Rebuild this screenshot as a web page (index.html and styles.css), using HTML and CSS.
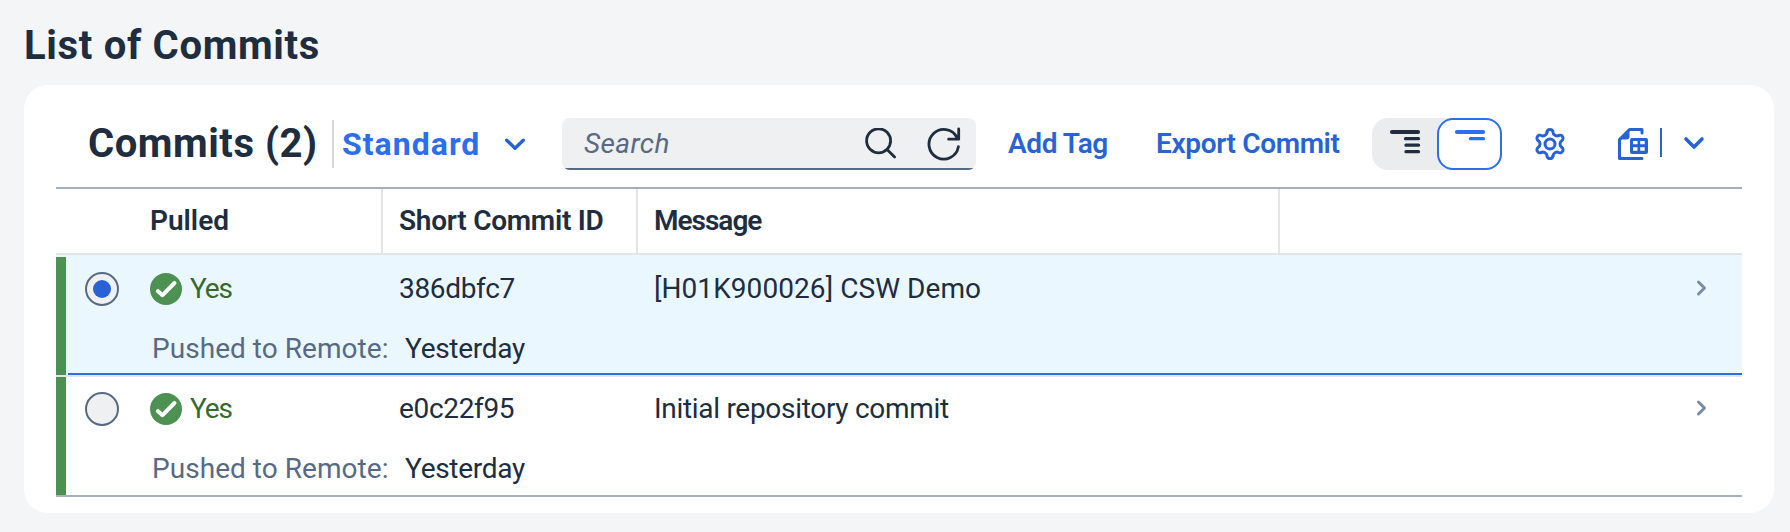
FILE: index.html
```html
<!DOCTYPE html>
<html lang="en">
<head>
<meta charset="utf-8">
<title>List of Commits</title>
<link rel="stylesheet" href="styles.css">
</head>
<body>
<h1 class="page-title">List of Commits</h1>
<section class="card">
  <div class="toolbar">
    <h2 class="table-title">Commits (2)</h2>
    <div class="variant">
      <span class="variant-name">Standard</span>
      <svg class="variant-arrow" width="24" height="24" viewBox="0 0 24 24"><path d="M3.700 8.200 12 16.200l8.300-8" /></svg>
    </div>
    <div class="search">
      <span class="search-hint">Search</span>
      <svg class="search-icon" width="32" height="32" viewBox="0 0 32 32"><circle cx="13.600" cy="12.800" r="12" /><path d="m22.300 21.800 7.300 7.300" /></svg>
      <svg class="refresh-icon" width="34" height="34" viewBox="0 0 34 34"><path d="M31.400 19.600A14.800 14.800 0 1 1 30 10.600M31.700 2v10.200H21.600" /></svg>
    </div>
    <button class="link-button add-tag">Add Tag</button>
    <button class="link-button export-commit">Export Commit</button>
    <div class="segmented">
      <button class="segment"><svg width="32" height="26" viewBox="0 0 32 26"><path class="thick" d="M3 3h26" /><path d="M16.500 9.700h13M17 16.200h12.500M17 22.700h12.500" /></svg></button>
      <button class="segment selected"><svg width="32" height="26" viewBox="0 0 32 26"><path class="thick" d="M3 3h26" /><path d="M16.500 9.700h13" /></svg></button>
    </div>
    <svg class="gear" width="32" height="34" viewBox="-16 -17 32 34">
      <path id="tooth" d="M-3-11.800A3 2.800 0 0 1 3-11.800C3-9.200 6.470-7.200 8.720-8.500" />
      <use href="#tooth" transform="rotate(60)" /><use href="#tooth" transform="rotate(120)" /><use href="#tooth" transform="rotate(180)" /><use href="#tooth" transform="rotate(240)" /><use href="#tooth" transform="rotate(300)" />
      <circle r="5" />
    </svg>
    <div class="export-split">
      <svg class="sheet" width="32" height="32" viewBox="0 0 32 32"><path class="line" d="M24 5V1.500H11.500L1.500 11.500v19H24" /><path class="fill" d="M11.500 1.500v7a3 3 0 0 1-3 3h-7z" /><path class="fill" fill-rule="evenodd" d="M14 10h14a2 2 0 0 1 2 2v12a2 2 0 0 1-2 2H14a2 2 0 0 1-2-2V12a2 2 0 0 1 2-2zm1 3v3.300h4.500V13zm7.200 0v3.300h4.500V13zm-7.200 6.300v3.400h4.500v-3.400zm7.200 0v3.400h4.500v-3.400z" /></svg>
      <span class="split-line"></span>
      <svg class="export-arrow" width="24" height="24" viewBox="0 0 24 24"><path d="m4 7 8 8 8-8" /></svg>
    </div>
  </div>

  <div class="table">
    <div class="head">
      <div class="th pulled">Pulled</div>
      <div class="th commit">Short Commit ID</div>
      <div class="th message">Message</div>
      <div class="th"></div>
    </div>

    <div class="row active">
      <div class="highlight"></div>
      <div class="row-body">
        <div class="cells">
          <span class="radio"><span class="dot"></span></span>
          <span class="status"><svg width="32" height="32" viewBox="0 0 32 32"><circle cx="16" cy="16" r="16" /><path d="m7.800 18 4.700 4.200L24.500 10" /></svg><span class="yes">Yes</span></span>
          <span class="hash">386dbfc7</span>
          <span class="text demo">[H01K900026] CSW Demo</span>
          <svg class="nav" width="16" height="20" viewBox="0 0 16 20"><path d="m3.500 4 6 6-6 6" /></svg>
        </div>
        <div class="details"><span class="label">Pushed to Remote:</span><span class="value">Yesterday</span></div>
      </div>
    </div>

    <div class="row last">
      <div class="highlight"></div>
      <div class="row-body">
        <div class="cells">
          <span class="radio"></span>
          <span class="status"><svg width="32" height="32" viewBox="0 0 32 32"><circle cx="16" cy="16" r="16" /><path d="m7.800 18 4.700 4.200L24.500 10" /></svg><span class="yes">Yes</span></span>
          <span class="hash">e0c22f95</span>
          <span class="text">Initial repository commit</span>
          <svg class="nav" width="16" height="20" viewBox="0 0 16 20"><path d="m3.500 4 6 6-6 6" /></svg>
        </div>
        <div class="details"><span class="label">Pushed to Remote:</span><span class="value">Yesterday</span></div>
      </div>
    </div>
  </div>
</section>
</body>
</html>
```

FILE: styles.css
```css
* { box-sizing: border-box; }

body {
  margin: 0;
  height: 532px;
  overflow: hidden;
  background: #f4f5f7;
  color: #202d3e;
  font: 400 28px/40px Roboto, "Noto Sans", sans-serif;
  white-space: nowrap;
}

svg { display: block; flex: none; fill: none; stroke: currentColor; stroke-linecap: round; stroke-linejoin: round; }

button { margin: 0; padding: 0; border: 0; background: none; font: inherit; color: inherit; }

.page-title {
  margin: 0;
  height: 85px;
  padding: 21px 0 0 24px;
  font-size: 40px;
  line-height: 50px;
  letter-spacing: 0.68px;
}

.card {
  width: 1750px;
  height: 428px;
  margin-left: 24px;
  padding: 0 32px;
  border-radius: 24px;
  background: #fff;
}

/* Toolbar */
.toolbar { display: flex; align-items: center; height: 102px; padding-top: 16px; }

.table-title {
  width: 278px;
  height: 48px;
  margin: 0;
  padding-left: 32px;
  border-right: 2px solid #d9d9d9;
  font-size: 40px;
  line-height: 48px;
  letter-spacing: 0.54px;
}

.variant { display: flex; align-items: center; width: 228px; padding-left: 8px; color: #2d6eef; }
.variant-name { width: 150px; font-size: 32px; font-weight: 700; letter-spacing: 1.03px; }
.variant-arrow { margin-left: 10.5px; color: #2763d4; stroke-width: 3.4; }

.search {
  display: flex;
  align-items: center;
  width: 414px;
  height: 52px;
  padding: 0 15px 0 22px;
  border-radius: 8px;
  background: linear-gradient(#556b82, #556b82) bottom / 100% 2px no-repeat #eff0f2;
}
.search-hint { flex: 1; color: #586a83; font-style: italic; letter-spacing: 0.4px; }
.search-icon { stroke-width: 2.8; margin-right: 30px; }
.refresh-icon { stroke-width: 2.8; }

.link-button { color: #2763d4; font-weight: 600; text-align: left; line-height: 38px; }
.add-tag { width: 148px; margin-left: 32px; letter-spacing: -0.41px; }
.export-commit { width: 216px; letter-spacing: -0.35px; }

.segmented { display: flex; width: 130px; height: 52px; border-radius: 16px; background: #ebecee; }
.segment { display: flex; align-items: flex-start; width: 65px; padding: 11px 0 0 17px; height: 52px; }
.segment svg { stroke-width: 3.3; }
.segment .thick { stroke-width: 4.2; }
.selected { padding: 9px 0 0 15px; border: 2px solid #2d6eef; border-radius: 16px; background: #fff; color: #2d6eef; }

.gear { margin-left: 32px; color: #2763d4; stroke-width: 3; }

.export-split { display: flex; align-items: center; margin-left: 52px; color: #2763d4; }
.sheet .line { stroke-width: 3; }
.sheet .fill { fill: currentColor; stroke: none; }
.split-line { width: 2px; height: 29px; margin: 0 20px 3px 10px; background: #2763d4; }
.export-arrow { stroke-width: 3.6; }

/* Table */
.table { border-top: 2px solid #a5b0bd; }

.head { display: flex; height: 66px; border-bottom: 2px solid #e4e4e4; font-weight: 600; line-height: 63px; }
.th { flex: 1; padding-left: 17px; }
.pulled { flex: 0 0 327px; padding-left: 94px; }
.commit { flex: 0 0 255px; padding-left: 16px; letter-spacing: -0.26px; }
.message { flex: 0 0 642px; padding-left: 16px; letter-spacing: -1px; }
.pulled, .commit, .message { border-right: 2px solid #e4e4e4; }

.row { display: flex; gap: 2px; height: 120px; border-bottom: 2px solid #e4e4e4; }
.highlight { width: 10px; background: #4d9152; }
.row-body { flex: 1; padding-top: 6px; }
.active { height: 122px; padding-top: 2px; background: #ebf7fe; }
.active .row-body { box-shadow: inset 0 -2px #2d6eef; }
.last { border-color: #a5b0bd; }

.cells { display: flex; align-items: center; height: 52px; line-height: 50px; }

.radio {
  display: grid;
  place-items: center;
  width: 34px;
  height: 34px;
  margin: 0 31px 0 17px;
  border: 2px solid #586a83;
  border-radius: 50%;
  background: #eff0f2;
}
.dot { width: 18px; height: 18px; border-radius: 50%; background: #2763d4; }

.status { display: flex; align-items: center; width: 249px; color: #38692f; }
.status svg { stroke: none; }
.status circle { fill: #4d9152; }
.status path { stroke: #fff; stroke-width: 4; }
.yes { margin-left: 8px; letter-spacing: -1.2px; }

.hash { width: 255px; letter-spacing: -0.33px; }
.text { flex: 1; letter-spacing: -0.3px; }
.demo { letter-spacing: 0.07px; }
.nav { margin: 0 31px 3px 0; color: #788ba7; stroke-width: 3; }

.details { display: flex; height: 60px; padding: 9px 0 0 84px; line-height: 50px; }
.label { width: 253px; color: #586a83; letter-spacing: 0.04px; }
.value { letter-spacing: -0.3px; }
```
